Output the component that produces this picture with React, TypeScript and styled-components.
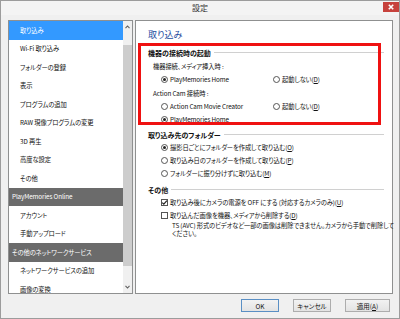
import React from 'react';
import styled, { createGlobalStyle } from 'styled-components';

const GlobalStyle = createGlobalStyle`
  html, body {
    margin: 0;
    padding: 0;
    background: #ffffff;
  }
  body {
    font-family: "Noto Sans CJK JP", "Noto Sans", sans-serif;
    font-feature-settings: "palt";
    color: #111;
  }
`;

type ListEntry = { label: string; kind?: 'selected' | 'header' };

const listEntries: ListEntry[] = [
  { label: '取り込み', kind: 'selected' },
  { label: 'Wi-Fi 取り込み' },
  { label: 'フォルダーの登録' },
  { label: '表示' },
  { label: 'プログラムの追加' },
  { label: 'RAW 現像プログラムの変更' },
  { label: '3D 再生' },
  { label: '高度な設定' },
  { label: 'その他' },
  { label: 'PlayMemories Online', kind: 'header' },
  { label: 'アカウント' },
  { label: '手動アップロード' },
  { label: 'その他のネットワークサービス', kind: 'header' },
  { label: 'ネットワークサービスの追加' },
  { label: '画像の変換' },
];

function Radio({ checked }: { checked?: boolean }) {
  return <RadioCircle $checked={checked} />;
}

function Check({ checked }: { checked?: boolean }) {
  return (
    <CheckBox>
      {checked && (
        <svg width="7" height="7" viewBox="0 0 7 7">
          <path d="M1.2 3.6 L2.8 5.2 L5.9 1.6" fill="none" stroke="#222" strokeWidth="1.2" />
        </svg>
      )}
    </CheckBox>
  );
}

export default function App() {
  return (
    <>
      <GlobalStyle />
      <Window>
        <TitleBar>
          <span />
          <TitleText>設定</TitleText>
          <CloseButton>
            <svg width="6" height="6" viewBox="0 0 6 6">
              <path d="M0.8 0.8 L5.2 5.2 M5.2 0.8 L0.8 5.2" stroke="#fff" strokeWidth="1.6" />
            </svg>
          </CloseButton>
        </TitleBar>
        <Client>
          <Panels>
            <SideList>
              <List>
                {listEntries.map(entry => (
                  <ListItem key={entry.label} $kind={entry.kind}>
                    {entry.label}
                  </ListItem>
                ))}
              </List>
              <ScrollBar>
                <ScrollArrow>
                  <svg width="5" height="4" viewBox="0 0 5 4">
                    <path d="M0.5 3.2 L2.5 1 L4.5 3.2" fill="none" stroke="#606060" strokeWidth="1.1" />
                  </svg>
                </ScrollArrow>
                <Thumb />
                <ScrollSpacer />
                <ScrollArrow>
                  <svg width="5" height="4" viewBox="0 0 5 4">
                    <path d="M0.5 0.8 L2.5 3 L4.5 0.8" fill="none" stroke="#606060" strokeWidth="1.1" />
                  </svg>
                </ScrollArrow>
              </ScrollBar>
            </SideList>

            <ContentPanel>
              <PageTitle>取り込み</PageTitle>

              <GroupHeader>機器の接続時の起動</GroupHeader>
              <Label>機器接続、メディア挿入時 :</Label>
              <OptionRow>
                <Option $width={112}>
                  <Radio checked />
                  <OptionText>PlayMemories Home</OptionText>
                </Option>
                <Option>
                  <Radio />
                  <OptionText>
                    起動しない(<u>D</u>)
                  </OptionText>
                </Option>
              </OptionRow>
              <Label>Action Cam 接続時 :</Label>
              <OptionRow>
                <Option $width={112}>
                  <Radio />
                  <OptionText>Action Cam Movie Creator</OptionText>
                </Option>
                <Option>
                  <Radio />
                  <OptionText>
                    起動しない(<u>D</u>)
                  </OptionText>
                </Option>
              </OptionRow>
              <OptionRow>
                <Option>
                  <Radio checked />
                  <OptionText>PlayMemories Home</OptionText>
                </Option>
              </OptionRow>

              <GroupHeader $gap={2}>取り込み先のフォルダー</GroupHeader>
              <OptionRow>
                <Option>
                  <Radio checked />
                  <OptionText>
                    撮影日ごとにフォルダーを作成して取り込む(<u>O</u>)
                  </OptionText>
                </Option>
              </OptionRow>
              <OptionRow>
                <Option>
                  <Radio />
                  <OptionText>
                    取り込み日のフォルダーを作成して取り込む(<u>P</u>)
                  </OptionText>
                </Option>
              </OptionRow>
              <OptionRow>
                <Option>
                  <Radio />
                  <OptionText>
                    フォルダーに振り分けずに取り込む(<u>M</u>)
                  </OptionText>
                </Option>
              </OptionRow>

              <GroupHeader $gap={3}>その他</GroupHeader>
              <OptionRow>
                <Option>
                  <Check checked />
                  <OptionText>
                    取り込み後にカメラの電源を OFF にする (対応するカメラのみ)(<u>U</u>)
                  </OptionText>
                </Option>
              </OptionRow>
              <OptionRow>
                <Option>
                  <Check />
                  <OptionText>
                    取り込んだ画像を機器、メディアから削除する(<u>D</u>)
                  </OptionText>
                </Option>
              </OptionRow>
              <Note>
                <NoteLine>TS (AVC) 形式のビデオなど一部の画像は削除できません。カメラから手動で削除して</NoteLine>
                <NoteLine>ください。</NoteLine>
              </Note>

              <Highlight />
            </ContentPanel>
          </Panels>

          <Footer>
            <DialogButton $width={38} $primary>
              OK
            </DialogButton>
            <DialogButton $width={38}>キャンセル</DialogButton>
            <DialogButton $width={45}>
              適用(<u>A</u>)
            </DialogButton>
          </Footer>
        </Client>
      </Window>
    </>
  );
}

const Window = styled.div`
  width: 400px;
  height: 319px;
  box-sizing: border-box;
  border: 1px solid #9c9c9c;
  background: #f0f0f0;
  display: flex;
  flex-direction: column;
`;

const TitleBar = styled.div`
  height: 14px;
  flex: none;
  display: grid;
  grid-template-columns: 1fr auto 1fr;
  align-items: start;
  background: #f4f4f4;
`;

const TitleText = styled.div`
  font-size: 8px;
  line-height: 14px;
  color: #333;
`;

const CloseButton = styled.div`
  justify-self: end;
  width: 16px;
  height: 10px;
  margin-top: 1px;
  background: #c7423d;
  display: flex;
  align-items: center;
  justify-content: center;
`;

const Client = styled.div`
  flex: 1;
  display: flex;
  flex-direction: column;
  padding: 5px 6px 0 7px;
`;

const Panels = styled.div`
  display: flex;
  gap: 2px;
  height: 274px;
`;

const SideList = styled.div`
  width: 125px;
  box-sizing: border-box;
  border: 1px solid #8f9090;
  background: #fff;
  display: flex;
  overflow: hidden;
`;

const List = styled.div`
  flex: 1;
  overflow: hidden;
`;

const ListItem = styled.div<{ $kind?: 'selected' | 'header' }>`
  height: 18.5px;
  display: flex;
  align-items: center;
  white-space: nowrap;
  font-size: 6.3px;
  letter-spacing: -0.1px;
  padding-left: ${p => (p.$kind === 'header' ? 3 : 11)}px;
  color: ${p => (p.$kind ? '#fff' : '#111')};
  background: ${p =>
    p.$kind === 'selected' ? '#3399ff' : p.$kind === 'header' ? '#6b6b6b' : 'transparent'};
`;

const ScrollBar = styled.div`
  width: 9px;
  flex: none;
  background: #f0f0f0;
  display: flex;
  flex-direction: column;
`;

const ScrollArrow = styled.div`
  height: 12px;
  display: flex;
  align-items: center;
  justify-content: center;
`;

const Thumb = styled.div`
  margin-top: 12px;
  height: 221px;
  background: #cdcdcd;
`;

const ScrollSpacer = styled.div`
  flex: 1;
`;

const ContentPanel = styled.div`
  position: relative;
  width: 258px;
  box-sizing: border-box;
  border: 1px solid #8f9090;
  background: #fff;
  padding: 7px 8px 0 12px;
  font-size: 6.3px;
  letter-spacing: -0.1px;
`;

const PageTitle = styled.div`
  font-size: 9px;
  line-height: 14px;
  letter-spacing: 0;
  color: #1b4b9e;
  margin-bottom: 4px;
`;

const GroupHeader = styled.div<{ $gap?: number }>`
  height: 13px;
  margin-top: ${p => p.$gap ?? 0}px;
  display: flex;
  align-items: center;
  gap: 3px;
  font-size: 7px;
  letter-spacing: 0;
  font-weight: 700;
  white-space: nowrap;

  &::after {
    content: '';
    flex: 1;
    height: 1px;
    background: #d0d0d0;
  }
`;

const Label = styled.div`
  height: 13px;
  display: flex;
  align-items: center;
  padding-left: 5px;
  margin-top: 1px;
  white-space: nowrap;
`;

const OptionRow = styled.div`
  height: 13px;
  display: flex;
  align-items: center;
  padding-left: 13px;
`;

const Option = styled.div<{ $width?: number }>`
  display: flex;
  align-items: center;
  gap: 2px;
  white-space: nowrap;
  width: ${p => (p.$width ? `${p.$width}px` : 'auto')};
`;

const OptionText = styled.span`
  line-height: 13px;
`;

const RadioCircle = styled.span<{ $checked?: boolean }>`
  width: 7px;
  height: 7px;
  box-sizing: border-box;
  border: 1px solid #555;
  border-radius: 50%;
  background: #fff;
  display: flex;
  align-items: center;
  justify-content: center;

  &::after {
    content: '';
    width: 3px;
    height: 3px;
    border-radius: 50%;
    background: ${p => (p.$checked ? '#222' : 'transparent')};
  }
`;

const CheckBox = styled.span`
  width: 7px;
  height: 7px;
  box-sizing: border-box;
  border: 1px solid #555;
  background: #fff;
  display: flex;
  align-items: center;
  justify-content: center;

  svg {
    margin: -1px;
  }
`;

const Note = styled.div`
  padding-left: 24px;
  line-height: 8px;
`;

const NoteLine = styled.div`
  white-space: nowrap;
`;

const Highlight = styled.div`
  position: absolute;
  left: 2px;
  top: 22px;
  width: 243px;
  height: 82px;
  box-sizing: border-box;
  border: 3px solid #ef1111;
  pointer-events: none;
`;

const Footer = styled.div`
  display: flex;
  justify-content: flex-end;
  gap: 14px;
  padding-top: 5px;
  padding-right: 3px;
`;

const DialogButton = styled.div<{ $width: number; $primary?: boolean }>`
  width: ${p => p.$width}px;
  height: 13px;
  box-sizing: border-box;
  border: 1px solid ${p => (p.$primary ? '#5a8fc4' : '#adadad')};
  background: linear-gradient(#f2f2f2, #e3e3e3);
  font-size: 6.5px;
  display: flex;
  align-items: center;
  justify-content: center;
  color: #111;
`;
